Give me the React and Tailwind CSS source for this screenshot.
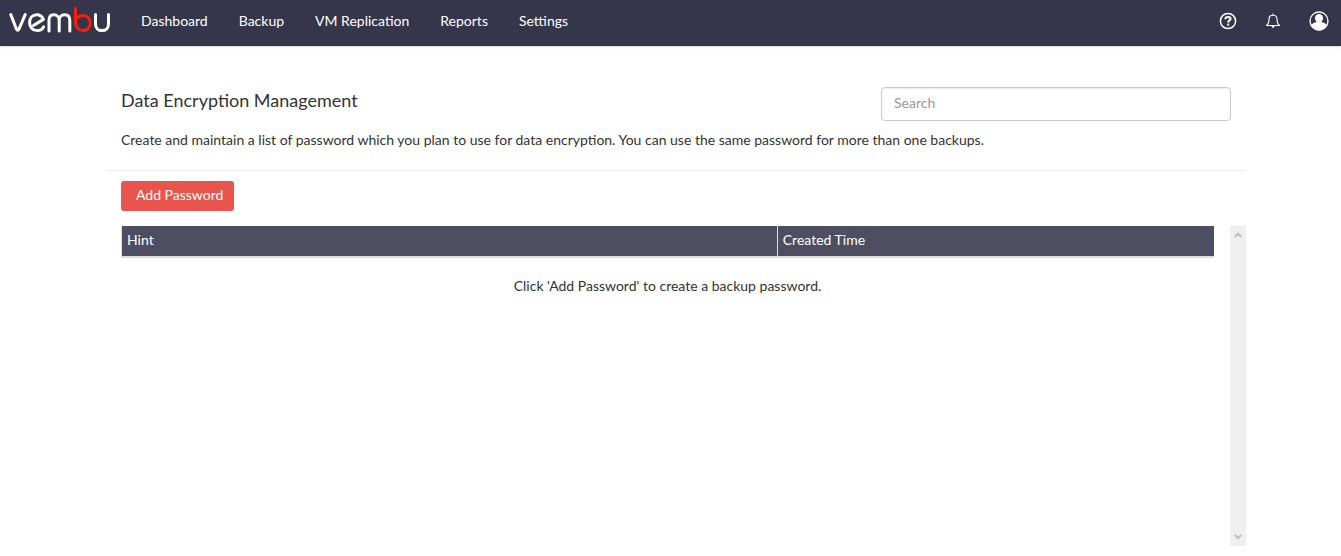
import { useState } from 'react'

const navItems = ['Dashboard', 'Backup', 'VM Replication', 'Reports', 'Settings']

function Logo() {
  return (
    <svg width="102" height="28" viewBox="0 0 102 28" fill="none" strokeWidth="3" strokeLinecap="round" strokeLinejoin="round" role="img" aria-label="vembu">
      <g stroke="#fff">
        <path d="M1.8 8.6 L7.4 23 Q8.7 25.6 10 23 L16.2 8.6" />
        <path d="M24.5 19.5 L34.4 13.4 C33 10.4 30.7 8.8 27.8 8.8 C23.4 8.8 20.6 12 20.6 16.4 C20.6 21 23.6 24.6 28 24.6 C31 24.6 33.4 23.2 34.6 20.8" />
        <path d="M40 25 V14.4 C40 10.8 41.8 8.8 44.7 8.8 C47.8 8.8 50.2 10.8 50.2 14.4 V25 M50.2 14.4 C50.2 10.8 52.6 8.8 55.6 8.8 C58.8 8.8 60.8 10.8 60.8 14.4 V25" />
        <path d="M86.5 8.6 V17.9 C86.5 22.2 89.2 24.6 93 24.6 C96.8 24.6 99.5 22.2 99.5 17.9 V8.6" />
      </g>
      <path stroke="#fb1d08" d="M66.5 2.5 V16.6 C66.5 21.2 69.8 24.6 74 24.6 C78.3 24.6 81.3 21.2 81.3 17 C81.3 12.6 78.3 9.4 74 9.4 C71.6 9.4 69.4 10.4 68 12" />
    </svg>
  )
}

function HelpIcon() {
  return (
    <svg width="18" height="18" viewBox="0 0 18 18" fill="none" stroke="#fff" aria-hidden="true">
      <circle cx="9" cy="9" r="7.6" strokeWidth="1.5" />
      <path d="M6.4 7.2 C6.4 5.5 7.4 4.9 9 4.9 C10.6 4.9 11.6 5.6 11.6 6.8 C11.6 8.4 9.2 8.4 9.2 10.4" strokeWidth="2" />
      <path d="M9.2 11.6 V13.6" strokeWidth="2" />
    </svg>
  )
}

function BellIcon() {
  return (
    <svg width="16" height="16" viewBox="0 0 16 16" fill="none" stroke="#fff" strokeWidth="1.1" strokeLinejoin="round" aria-hidden="true">
      <path d="M8 .5 V2.2 M1.5 12.5 C3.5 11 4 9 4 6.2 C4 3.6 5.6 2.2 8 2.2 C10.4 2.2 12 3.6 12 6.2 C12 9 12.5 11 14.5 12.5 Z" />
      <path d="M6 12.8 H10 L8 15.2 Z" fill="#fff" stroke="none" />
    </svg>
  )
}

function UserIcon() {
  return (
    <svg width="20" height="20" viewBox="0 0 20 20" aria-hidden="true">
      <circle cx="10" cy="10" r="9" fill="none" stroke="#fff" strokeWidth="1.3" />
      <path d="M10 3 C12.4 3 14 4.7 14 7 C14 8.8 13.3 10.2 12.2 11 C15 11.4 17.2 12.6 17.8 14.8 C16.2 17.8 13.3 19.5 10 19.5 C6.7 19.5 3.8 17.8 2.2 14.8 C2.8 12.6 5 11.4 7.8 11 C6.7 10.2 6 8.8 6 7 C6 4.7 7.6 3 10 3 Z" fill="#fff" />
    </svg>
  )
}

function ScrollArrow({ down }) {
  return (
    <svg width="8" height="6" viewBox="0 0 8 6" fill="none" stroke="#bcbcbc" strokeWidth="2" className={down ? 'rotate-180' : ''} aria-hidden="true">
      <path d="M.8 5 L4 1.8 L7.2 5" />
    </svg>
  )
}

export default function App() {
  const [search, setSearch] = useState('')

  return (
    <div className="flex min-h-screen flex-col bg-white font-['Lato',sans-serif] text-sm text-[#333]">
      <header className="flex h-[46px] items-center border-b border-[#2d2e42] bg-[#35364b] pr-3 pl-[9px] text-white shadow-sm">
        <a href="#" className="mb-1.5"><Logo /></a>
        <nav className="mb-1 ml-[30px] flex gap-[31px]">
          {navItems.map((item) => (
            <a key={item} href="#">{item}</a>
          ))}
        </nav>
        <div className="mb-1 ml-auto flex items-center gap-7">
          <button type="button" aria-label="Help"><HelpIcon /></button>
          <button type="button" aria-label="Notifications"><BellIcon /></button>
          <button type="button" aria-label="Account"><UserIcon /></button>
        </div>
      </header>

      <main className="flex grow flex-col pt-[41px] pr-[95px] pb-2.5 pl-[106px]">
        <section className="border-b border-[#eee] px-[15px] pb-5">
          <div className="flex items-start justify-between">
            <h1 className="pt-0.5 text-lg leading-[22px]">Data Encryption Management</h1>
            <input
              type="search"
              aria-label="Search"
              placeholder="Search"
              value={search}
              onChange={(e) => setSearch(e.target.value)}
              className="h-[34px] w-[350px] rounded border border-[#ccc] px-3 pb-[3px] shadow-[inset_0_1px_1px_rgba(0,0,0,0.075)] placeholder:text-[#999]"
            />
          </div>
          <p className="mt-[9px] leading-5">
            Create and maintain a list of password which you plan to use for data encryption. You can use the same password for more than one backups.
          </p>
        </section>

        <div className="pt-2.5 pl-[15px]">
          <button type="button" className="h-[30px] rounded-[3px] bg-[#e8554f] pr-[11px] pb-0.5 pl-[15px] text-white">
            Add Password
          </button>
        </div>

        {/* Password list */}
        <div className="mt-[15px] flex grow">
          <div className="grow pr-4 pl-[15px]">
            <table className="w-full table-fixed border-separate border-spacing-0">
              <thead>
                <tr className="bg-[#4e4e63] text-left text-white">
                  <th className="w-3/5 border-b-2 border-l border-[#ddd] px-[5px] pt-1 pb-1.5 leading-5 font-normal">Hint</th>
                  <th className="border-b-2 border-l border-[#ddd] px-[5px] pt-1 pb-1.5 leading-5 font-normal">Created Time</th>
                </tr>
              </thead>
              <tbody>
                <tr>
                  <td colSpan={2} className="pt-[18px] text-center leading-5">
                    Click 'Add Password' to create a backup password.
                  </td>
                </tr>
              </tbody>
            </table>
          </div>
          <div className="flex w-4 shrink-0 flex-col items-center justify-between bg-[#efefef] py-1.5">
            <ScrollArrow />
            <ScrollArrow down />
          </div>
        </div>
      </main>
    </div>
  )
}
